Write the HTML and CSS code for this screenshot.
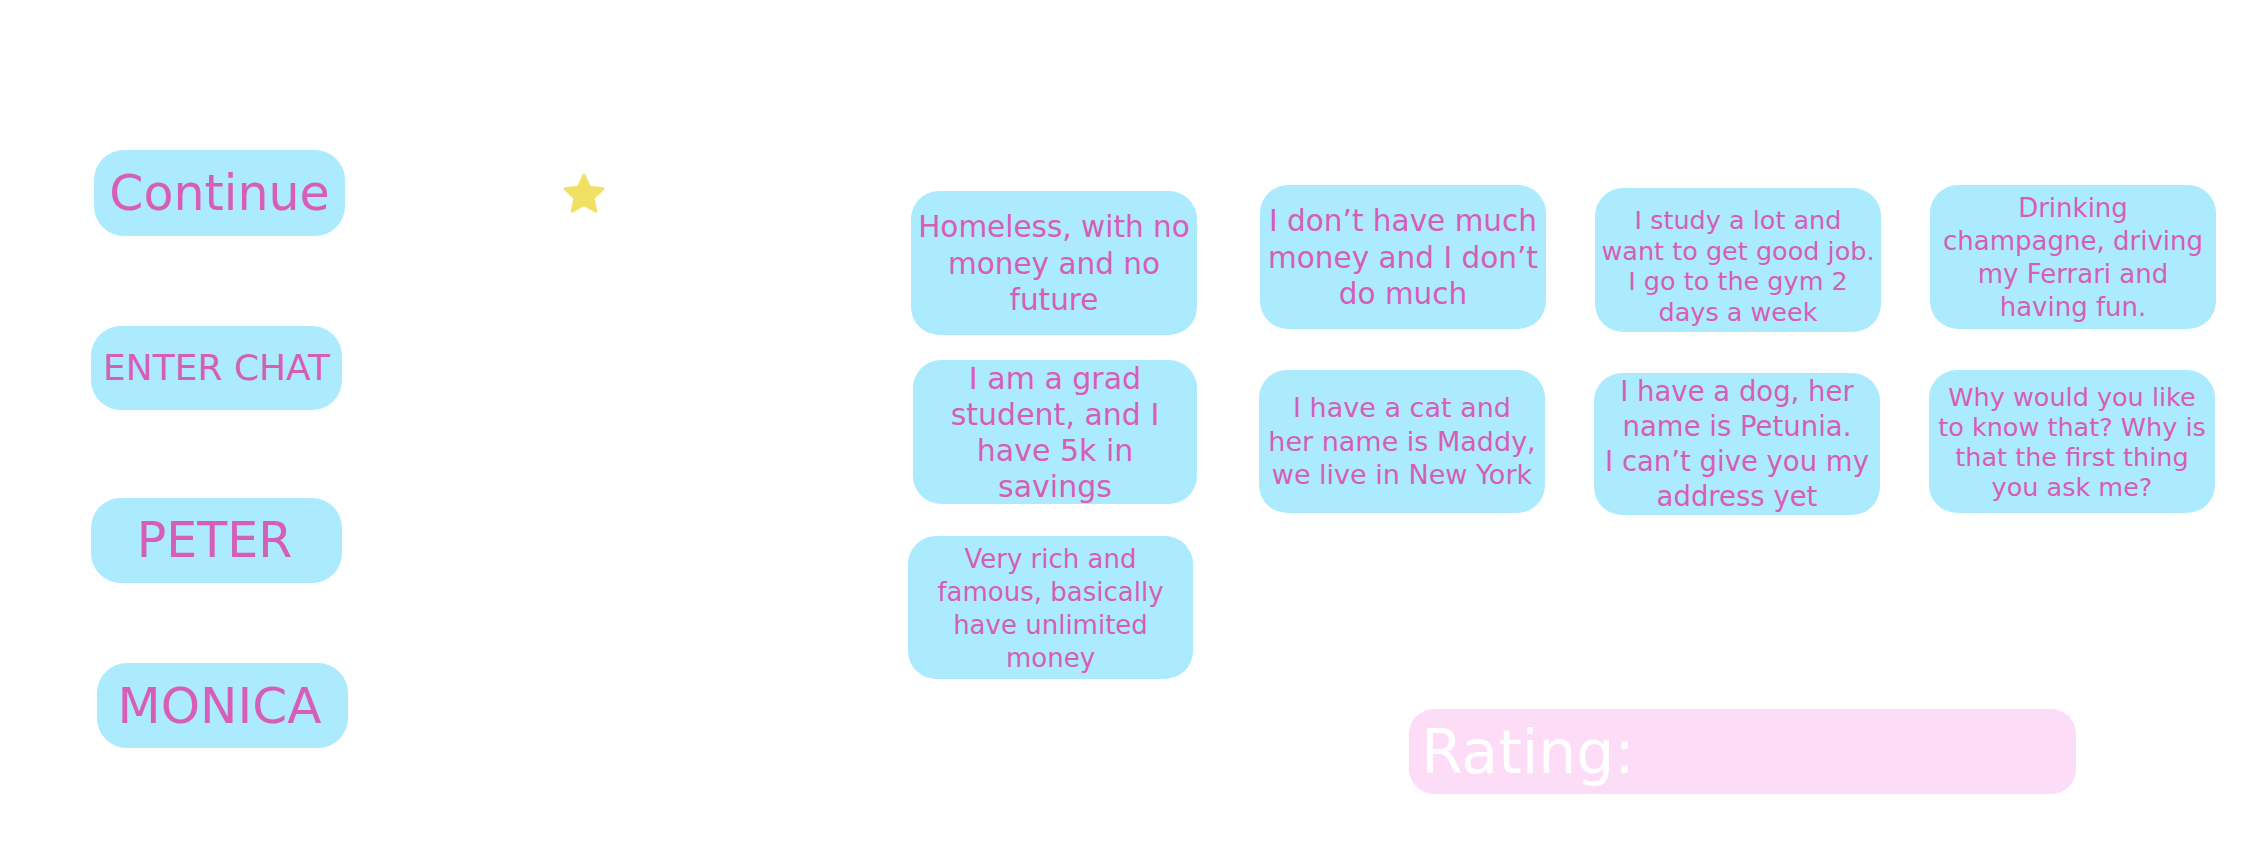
FILE: index.html
```html
<!DOCTYPE html>
<html lang="en">
<head>
<meta charset="utf-8">
<title>Chat prototype</title>
<link rel="stylesheet" href="styles.css">
</head>
<body>
<div class="canvas">
  <div class="menu">
    <div class="btn btn-continue">Continue</div>
    <div class="btn btn-enter">ENTER CHAT</div>
    <div class="btn btn-peter">PETER</div>
    <div class="btn btn-monica">MONICA</div>
  </div>

  <svg class="star" viewBox="0 0 44 44" width="44" height="44" aria-hidden="true">
    <polygon points="22,3 27.59,15.31 41.02,16.82 31.04,25.94 33.76,39.18 22,32.5 10.24,39.18 12.96,25.94 2.98,16.82 16.41,15.31" fill="#f0e064" stroke="#f0e064" stroke-width="3" stroke-linejoin="round"/>
  </svg>

  <div class="board">
    <div class="cards">
      <div class="card c-homeless"><p class="t-homeless">Homeless, with no<br>money and no<br>future</p></div>
      <div class="card c-dont"><p class="t-dont">I don’t have much<br>money and I don’t<br>do much</p></div>
      <div class="card c-study"><p class="t-study">I study a lot and<br>want to get good job.<br>I go to the gym 2<br>days a week</p></div>
      <div class="card c-drink"><p class="t-drink">Drinking<br>champagne, driving<br>my Ferrari and<br>having fun.</p></div>

      <div class="card c-grad"><p class="t-grad">I am a grad<br>student, and I<br>have 5k in<br>savings</p></div>
      <div class="card c-cat"><p class="t-cat">I have a cat and<br>her name is Maddy,<br>we live in New York</p></div>
      <div class="card c-dog"><p class="t-dog">I have a dog, her<br>name is Petunia.<br>I can’t give you my<br>address yet</p></div>
      <div class="card c-why"><p class="t-why">Why would you like<br>to know that? Why is<br>that the first thing<br>you ask me?</p></div>

      <div class="card c-rich"><p class="t-rich">Very rich and<br>famous, basically<br>have unlimited<br>money</p></div>
    </div>
    <div class="rating">Rating:</div>
  </div>
</div>
</body>
</html>
```

FILE: styles.css
```css
* { box-sizing: border-box; }

html, body {
  margin: 0;
  padding: 0;
  background: #ffffff;
}

body {
  font-family: "DejaVu Sans", Verdana, sans-serif;
  color: #d65db8;
}

.canvas {
  display: flex;
  align-items: flex-start;
  width: 2264px;
  height: 844px;
  overflow: hidden;
}

/* left menu buttons */
.menu {
  flex: none;
  width: 348px;
  padding: 150px 0 0 91px;
  display: flex;
  flex-direction: column;
  align-items: flex-start;
}

.btn {
  width: 251px;
  height: 85px;
  border-radius: 30px;
  background: #abebfd;
  color: #d65db8;
  display: flex;
  align-items: center;
  justify-content: center;
  white-space: nowrap;
  line-height: 1;
}

.btn-continue { margin-left: 3px; height: 86px; font-size: 49px; }
.btn-enter    { margin-top: 90px; height: 84px; font-size: 36px; }
.btn-peter    { margin-top: 88px; font-size: 49px; padding-right: 4px; }
.btn-monica   { margin-top: 80px; margin-left: 6px; font-size: 50px; padding-right: 6px; }

.star {
  flex: none;
  display: block;
  margin: 172px 0 0 214px;
}

/* answer cards */
.board {
  flex: none;
  margin-left: 302px;
  padding-top: 185px;
}

.cards {
  display: grid;
  grid-template-columns: 352px 335px 335px 286px;
  grid-template-rows: 175px 176px 144px;
  align-items: start;
}

.card {
  width: 286px;
  height: 144px;
  border-radius: 28px;
  background: #abebfd;
  display: flex;
  align-items: center;
  justify-content: center;
  text-align: center;
  white-space: nowrap;
}

.card p { margin: 0; }

.c-homeless { margin: 6px 0 0 3px; }
.c-dont     { margin: 0; }
.c-study    { margin: 3px 0 0 0; padding-top: 12px; }
.c-drink    { margin: 0; }
.c-grad     { margin: 0 0 0 5px; width: 284px; }
.c-cat      { margin: 10px 0 0 -1px; height: 143px; }
.c-dog      { margin: 13px 0 0 -1px; height: 142px; }
.c-why      { margin: 10px 0 0 -1px; height: 143px; }
.c-rich     { margin: 0; width: 285px; height: 143px; }

.t-homeless { font-size: 29.5px; line-height: 36.5px; padding-top: 2px; }
.t-dont     { font-size: 29.5px; line-height: 36.5px; padding-top: 2px; }
.t-study    { font-size: 25.5px; line-height: 30.5px; }
.t-drink    { font-size: 26px;   line-height: 33px; padding-top: 2px; }
.t-grad     { font-size: 30px;   line-height: 36px; padding-top: 2px; }
.t-cat      { font-size: 27px;   line-height: 33.5px; }
.t-dog      { font-size: 27.5px; line-height: 35px; }
.t-why      { font-size: 25.5px; line-height: 30px; }
.t-rich     { font-size: 26px;   line-height: 33px; padding-top: 2px; }

.rating {
  margin: 29px 0 0 501px;
  width: 667px;
  height: 85px;
  border-radius: 25px;
  background: #fcdcf7;
  color: #ffffff;
  font-size: 60px;
  line-height: 1;
  padding-left: 12px;
  display: flex;
  align-items: center;
}
```
